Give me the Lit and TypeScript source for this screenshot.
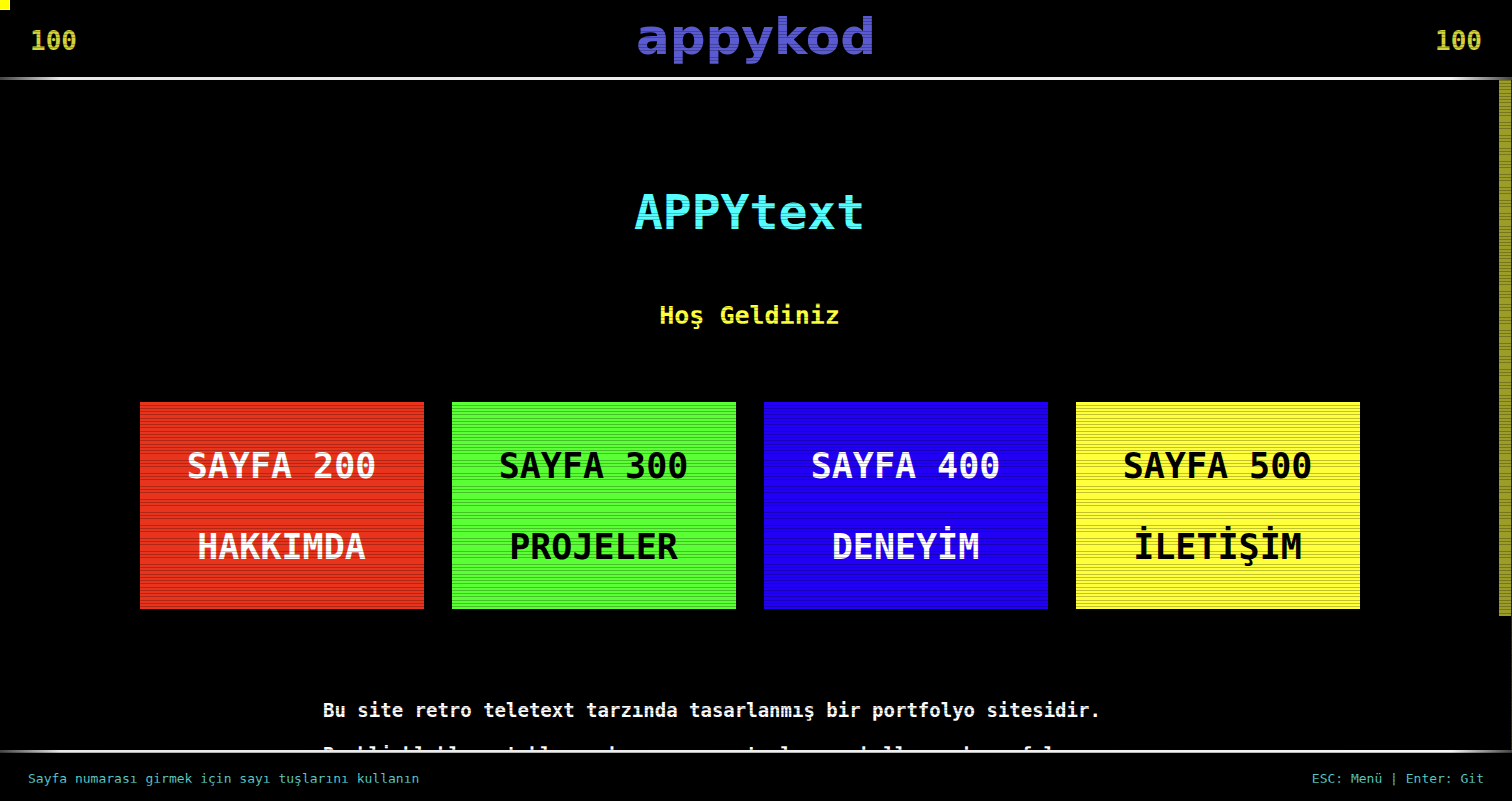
import { LitElement, html, css } from "lit";
import { customElement, state } from "lit/decorators.js";
import { classMap } from "lit/directives/class-map.js";

interface PageLink {
  page: number;
  title: string;
  tone: string;
}

const PAGES: PageLink[] = [
  { page: 200, title: "HAKKIMDA", tone: "red" },
  { page: 300, title: "PROJELER", tone: "green" },
  { page: 400, title: "DENEYİM", tone: "blue" },
  { page: 500, title: "İLETİŞİM", tone: "yellow" },
];

@customElement("app-root")
export class AppRoot extends LitElement {
  static styles = css`
    :host {
      display: flex;
      flex-direction: column;
      height: 100vh;
      overflow: hidden;
      background: #000;
      color: #fff;
      font-family: "DejaVu Sans Mono", monospace;
      font-weight: 700;
    }
    .header {
      display: grid;
      grid-template-columns: 1fr auto 1fr;
      align-items: center;
      height: 77px;
      padding: 0 30px;
      flex: none;
      font-size: 26px;
      line-height: 32px;
      color: #d2d23a;
    }
    .number {
      padding-top: 4px;
    }
    .number-end {
      text-align: right;
    }
    .logo {
      font-family: "DejaVu Sans", sans-serif;
      font-size: 50px;
      line-height: 56px;
      padding-bottom: 4px;
      color: #5a5ad2;
      text-decoration: none;
    }
    .rule {
      flex: none;
      height: 3px;
      background: linear-gradient(90deg, #444, #e8e8e8 4%, #f4f4f4 96%, #444);
    }
    .body {
      display: flex;
      flex: 1;
      min-height: 0;
    }
    .content {
      flex: 1;
      min-width: 0;
      overflow: hidden;
      display: flex;
      flex-direction: column;
      align-items: center;
      padding: 92px 28px 0;
    }
    .title {
      margin: 0;
      font-size: 48px;
      line-height: 80px;
      color: #5ff;
    }
    .subtitle {
      margin: 44px 0 0;
      font-size: 25px;
      line-height: 40px;
      color: #ffff3c;
    }
    .cards {
      display: grid;
      grid-template-columns: repeat(4, 1fr);
      gap: 28px;
      width: 100%;
      max-width: 1220px;
      margin-top: 66px;
    }
    .card {
      display: flex;
      flex-direction: column;
      align-items: center;
      justify-content: center;
      gap: 41px;
      margin: 0;
      padding: 44px 12px 42px;
      border: 0;
      border-radius: 0;
      font: inherit;
      font-size: 35px;
      line-height: 40px;
      cursor: pointer;
    }
    .red {
      background: #e8341c;
      color: #fff;
    }
    .green {
      background: #5bff35;
      color: #000;
    }
    .blue {
      background: #2200f5;
      color: #fff;
    }
    .yellow {
      background: #ffff3c;
      color: #000;
    }
    .intro {
      width: 100%;
      max-width: 853px;
      margin: 79px 0 0;
      font-size: 19px;
      line-height: 44px;
    }
    .track {
      flex: none;
      width: 12px;
      border-right: 1px solid #2c2c0c;
    }
    .thumb {
      height: 80%;
      background: #9c9c28;
    }
    .footer {
      display: flex;
      justify-content: space-between;
      align-items: center;
      gap: 28px;
      flex: none;
      height: 48px;
      padding: 4px 28px 0;
      box-sizing: border-box;
      font-size: 13px;
      line-height: 20px;
      font-weight: 400;
      color: #5accc8;
    }
    .scanlines {
      position: fixed;
      inset: 0;
      pointer-events: none;
      --ink: rgba(0, 0, 0, 0.24);
      background:
        repeating-linear-gradient(
          transparent 0 5px,
          var(--ink) 5px 6px,
          transparent 6px 8px,
          var(--ink) 8px 9px,
          transparent 9px 11px,
          var(--ink) 11px 12px,
          transparent 12px 13px
        ),
        repeating-linear-gradient(
          transparent 0 67px,
          var(--ink) 67px 68px,
          transparent 68px 80px,
          var(--ink) 80px 81px,
          transparent 81px 93px,
          var(--ink) 93px 94px,
          transparent 94px 106px,
          var(--ink) 106px 107px,
          transparent 107px 169px
        );
    }
    .cursor {
      position: fixed;
      top: 0;
      left: 0;
      width: 9px;
      height: 9px;
      background: #ff0;
      border: solid #fff;
      border-width: 0 1px 1px 0;
      pointer-events: none;
    }
  `;

  @state() private page = 100;

  private open(page: number) {
    this.page = page;
  }

  render() {
    return html`
      <header class="header">
        <span class="number">${this.page}</span>
        <a class="logo" href="#">appykod</a>
        <span class="number number-end">${this.page}</span>
      </header>
      <div class="rule"></div>
      <div class="body">
        <main class="content">
          <h1 class="title">APPYtext</h1>
          <p class="subtitle">Hoş Geldiniz</p>
          <nav class="cards">
            ${PAGES.map(
              (p) => html`
                <button
                  type="button"
                  class=${classMap({ card: true, [p.tone]: true })}
                  @click=${() => this.open(p.page)}
                >
                  <span>SAYFA ${p.page}</span>
                  <span>${p.title}</span>
                </button>
              `
            )}
          </nav>
          <p class="intro">
            Bu site retro teletext tarzında tasarlanmış bir portfolyo sitesidir.<br />
            Renkli bloklara tıklayarak veya sayı tuşlarını kullanarak sayfalar
          </p>
        </main>
        <div class="track"><div class="thumb"></div></div>
      </div>
      <div class="rule"></div>
      <footer class="footer">
        <span>Sayfa numarası girmek için sayı tuşlarını kullanın</span>
        <span>ESC: Menü | Enter: Git</span>
      </footer>
      <div class="scanlines"></div>
      <div class="cursor"></div>
    `;
  }
}
